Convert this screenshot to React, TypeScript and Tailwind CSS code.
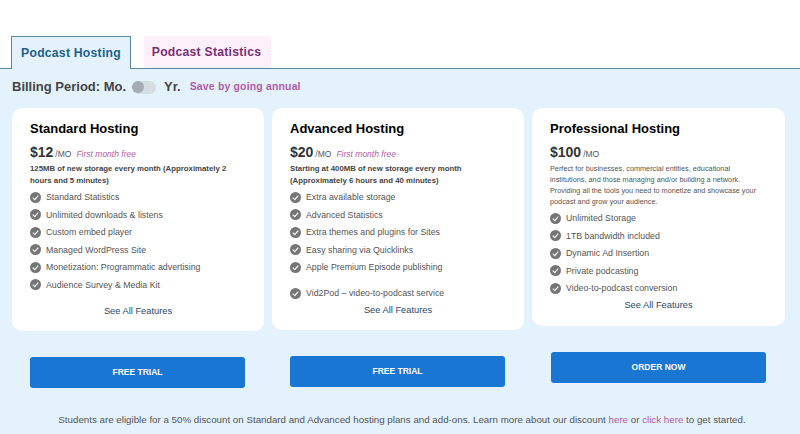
const font = { fontFamily: '"Liberation Sans", Arial, sans-serif' };

function Check() {
  return (
    <svg viewBox="0 0 12 12" className="w-[11px] h-[11px] shrink-0" aria-hidden="true">
      <circle cx="6" cy="6" r="6" fill="#757575" />
      <path d="M3 6.2 5.2 8.3 9 4" fill="none" stroke="#fff" strokeWidth="1.3" />
    </svg>
  );
}

function Item({ text, extra }: { text: string; extra?: boolean }) {
  return (
    <li className={`flex items-center gap-[5px] h-[14px] mb-[3.5px] ${extra ? "mt-[12px]" : ""}`}>
      <Check />
      <span className="text-[8.8px] leading-[14px] text-[#555] whitespace-nowrap">{text}</span>
    </li>
  );
}

function Plan({
  title, price, free, desc, small, items, cta, extraLast, seeTop, wide,
}: {
  title: string; price: string; free?: boolean; desc: string; small?: boolean;
  items: string[]; cta: string; extraLast?: boolean; seeTop: string; wide?: boolean;
}) {
  return (
    <div className={`flex flex-col items-stretch ${wide ? "w-[253px]" : "w-[252px]"}`}>
      <div className="bg-white rounded-[10px] pt-[12px] pb-[13.5px] px-[18px]">
        <h3 className="text-[13px] leading-[17px] font-bold text-black">{title}</h3>
        <div className="flex items-baseline mt-[6px] h-[18px]">
          <span className="text-[14px] leading-[18px] font-bold text-[#333]">{price}</span>
          <span className="text-[8.5px] text-[#555] ml-[2px]">/MO</span>
          {free && <span className="text-[8.5px] italic text-[#b060a8] ml-[5px]">First month free</span>}
        </div>
        {small ? (
          <p className="mt-[1.5px] mb-[4px] text-[7.3px] leading-[11.2px] text-[#555]">{desc}</p>
        ) : (
          <p className="mt-[2px] mb-[3px] text-[7.8px] leading-[12px] font-bold text-[#444]">{desc}</p>
        )}
        <ul>
          {items.map((t, i) => (
            <Item key={t} text={t} extra={extraLast && i === items.length - 1} />
          ))}
        </ul>
        <div className={`text-center text-[9.3px] leading-[13px] text-[#2a4a6a] ${seeTop}`}>See All Features</div>
      </div>
      <button className={`mt-[26px] h-[31px] rounded-[3px] bg-[#1976d2] text-white text-[8.5px] font-bold ${wide ? "ml-[19px] mr-[19px]" : "ml-[18px] mr-[19px]"}`}>
        {cta}
      </button>
    </div>
  );
}

export default function App() {
  return (
    <div className="w-[800px] h-[434px] overflow-hidden bg-white" style={font}>
      <div className="h-[36px]" />
      <div className="h-[33px] flex items-end pl-[11px] gap-[13px] border-b border-[#5b86a5]">
        <div className="w-[120px] h-[33px] -mb-px border border-b-0 border-[#5b86a5] bg-[#e3f2fd] flex items-center justify-center text-[12.2px] font-bold text-[#1f5f8b] tracking-[0.02em]">
          Podcast Hosting
        </div>
        <div className="w-[127px] h-[32px] bg-[#fdf0fa] flex items-center justify-center pr-[2px] text-[12.2px] font-bold text-[#7a2e72] tracking-[0.02em]">
          Podcast Statistics
        </div>
      </div>
      <div className="bg-[#e3f2fd] h-[365px] pl-[12px]">
        <div className="h-[39px] flex items-center pb-[3px]">
          <span className="text-[13px] font-bold text-[#444]">Billing Period: Mo.</span>
          <span className="ml-[6px] w-[24px] h-[13px] rounded-full bg-[#d5dce2] flex items-center">
            <span className="w-[12px] h-[12px] rounded-full bg-[#a3acb5]" />
          </span>
          <span className="ml-[8px] text-[13px] font-bold text-[#444]">Yr.</span>
          <span className="ml-[9px] text-[10.4px] font-bold text-[#b45aa5] tracking-[0.02em]">Save by going annual</span>
        </div>
        <div className="flex gap-[8px] items-start h-[280px]">
          <Plan
            title="Standard Hosting"
            price="$12"
            free
            desc="125MB of new storage every month (Approximately 2 hours and 5 minutes)"
            items={["Standard Statistics", "Unlimited downloads & listens", "Custom embed player", "Managed WordPress Site", "Monetization: Programmatic advertising", "Audience Survey & Media Kit"]}
            cta="FREE TRIAL"
            seeTop="mt-[13px]"
          />
          <Plan
            title="Advanced Hosting"
            price="$20"
            free
            desc="Starting at 400MB of new storage every month (Approximately 6 hours and 40 minutes)"
            items={["Extra available storage", "Advanced Statistics", "Extra themes and plugins for Sites", "Easy sharing via Quicklinks", "Apple Premium Episode publishing", "Vid2Pod – video-to-podcast service"]}
            extraLast
            cta="FREE TRIAL"
            seeTop="mt-[1px]"
          />
          <Plan
            wide
            title="Professional Hosting"
            price="$100"
            small
            desc="Perfect for businesses, commercial entities, educational institutions, and those managing and/or building a network. Providing all the tools you need to monetize and showcase your podcast and grow your audience."
            items={["Unlimited Storage", "1TB bandwidth included", "Dynamic Ad Insertion", "Private podcasting", "Video-to-podcast conversion"]}
            cta="ORDER NOW"
            seeTop="mt-0 mb-[1px]"
          />
        </div>
        <p className="mt-[25px] w-[780px] text-center text-[9.76px] leading-[14px] text-[#555] whitespace-nowrap">
          Students are eligible for a 50% discount on Standard and Advanced hosting plans and add-ons. Learn more about our discount{" "}
          <span className="text-[#b45aa5]">here</span> or <span className="text-[#b45aa5]">click here</span> to get started.
        </p>
      </div>
    </div>
  );
}
